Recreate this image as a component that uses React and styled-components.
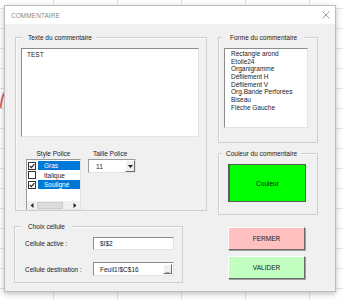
import React from 'react';
import styled, { createGlobalStyle } from 'styled-components';

const GlobalStyle = createGlobalStyle`
  body {
    margin: 0;
    background: #ffffff;
    font-family: 'Liberation Sans', Arial, sans-serif;
  }
`;

const Sheet = styled.div`
  position: relative;
  width: 343px;
  height: 300px;
  overflow: hidden;
  box-sizing: border-box;
  padding: 5px 0 0 4px;
  background-color: #ffffff;
  background-image:
    linear-gradient(to bottom, transparent 19px, #e2e2e2 19px, #e2e2e2 20px),
    linear-gradient(to right, transparent 63px, #e2e2e2 63px, #e2e2e2 64px);
  background-size: 100% 20px, 64px 100%;
  background-position: 0 9px, 54px 0;
`;

const RedScrap = styled.svg`
  position: absolute;
  left: 0;
  top: 90px;
`;

const Dialog = styled.div`
  position: relative;
  width: 332px;
  height: 287px;
  box-sizing: border-box;
  background: #f0f0f0;
  border: 1px solid #bcbcbc;
  box-shadow: 0 2px 6px rgba(0, 0, 0, 0.25);
  font-size: 6.5px;
  color: #1a1a1a;
`;

const TitleBar = styled.div`
  height: 18px;
  background: #ffffff;
  display: flex;
  align-items: center;
  justify-content: space-between;
  padding: 0 5px 0 6px;
`;

const Title = styled.span`
  color: #8a8a8a;
  font-size: 6.5px;
  letter-spacing: 0.05px;
`;

const Body = styled.div`
  display: flex;
  padding: 13px 0 0 9px;
`;

const Column = styled.div`
  display: flex;
  flex-direction: column;
  margin-left: ${p => p.$offset || 0}px;
`;

const Frame = styled.div`
  position: relative;
  box-sizing: border-box;
  width: ${p => p.$w}px;
  height: ${p => p.$h}px;
  margin-top: ${p => p.$mt || 0}px;
  margin-left: ${p => p.$ml || 0}px;
  border: 1px solid #cfcfcf;
  box-shadow: inset 1px 1px 0 #fafafa;
`;

const Legend = styled.span`
  position: absolute;
  top: -5px;
  left: ${p => p.$left}px;
  padding: 0 ${p => p.$pad}px;
  background: #f0f0f0;
  line-height: 9px;
  white-space: nowrap;
`;

const TextBox = styled.div`
  box-sizing: border-box;
  width: 178px;
  height: 89px;
  margin: 10px 0 0 5px;
  padding: 2px 5px;
  background: #ffffff;
  border: 1px solid;
  border-color: #8c8c8c #e3e3e3 #e3e3e3 #8c8c8c;
`;

const FontRow = styled.div`
  display: flex;
  margin: 12px 0 0 10px;
  gap: 7px;
`;

const FontCol = styled.div`
  display: flex;
  flex-direction: column;
  align-items: ${p => (p.$center ? 'center' : 'flex-start')};
`;

const SmallLabel = styled.span`
  height: 10px;
  line-height: 9px;
  padding-left: ${p => p.$pl || 0}px;
`;

const CheckList = styled.div`
  box-sizing: border-box;
  width: 55px;
  height: 51px;
  background: #ffffff;
  border: 1px solid;
  border-color: #9a9a9a #e3e3e3 #e3e3e3 #9a9a9a;
  display: flex;
  flex-direction: column;
  padding-top: 1px;
`;

const CheckRow = styled.div`
  display: flex;
  align-items: center;
  height: 9.5px;
  padding-left: 1px;
`;

const Box = styled.span`
  box-sizing: border-box;
  width: 8px;
  height: 8px;
  border: 1px solid #333333;
  background: #ffffff;
  display: flex;
  align-items: center;
  justify-content: center;
  flex-shrink: 0;
`;

const RowText = styled.span`
  flex: 1;
  height: 9px;
  line-height: 9px;
  margin-left: 2px;
  padding-left: 6px;
  background: ${p => (p.$sel ? '#0078d7' : 'transparent')};
  color: ${p => (p.$sel ? '#ffffff' : '#1a1a1a')};
`;

const HScroll = styled.div`
  margin-top: auto;
  height: 8px;
  display: flex;
  align-items: center;
  background: #f0f0f0;
  padding: 0 1px;
`;

const Arrow = styled.span`
  width: 8px;
  height: 8px;
  display: flex;
  align-items: center;
  justify-content: center;
  margin-left: ${p => p.$ml || 0}px;
`;

const Thumb = styled.span`
  box-sizing: border-box;
  width: 26px;
  height: 7px;
  margin-left: 1px;
  background: #dcdcdc;
  border: 1px solid #cdcdcd;
`;

const Combo = styled.div`
  box-sizing: border-box;
  width: 48px;
  height: 14px;
  display: flex;
  align-items: center;
  background: #ffffff;
  border: 1px solid;
  border-color: #9a9a9a #e3e3e3 #e3e3e3 #9a9a9a;
  padding-left: 7px;
`;

const DropButton = styled.span`
  box-sizing: border-box;
  margin-left: auto;
  width: 10px;
  height: 12px;
  background: #f0f0f0;
  border: 1px solid;
  border-color: #ffffff #6a6a6a #6a6a6a #ffffff;
  display: flex;
  align-items: center;
  justify-content: center;
`;

const ChoixBody = styled.div`
  display: flex;
  flex-direction: column;
  gap: 12px;
  padding: 10px 0 0 10px;
`;

const FieldRow = styled.div`
  display: flex;
  align-items: center;
`;

const FieldLabel = styled.span`
  width: 68px;
`;

const Field = styled.div`
  box-sizing: border-box;
  width: 81px;
  height: ${p => p.$h}px;
  display: flex;
  align-items: center;
  padding-left: 6px;
  background: #ffffff;
  border: 1px solid;
  border-color: #8c8c8c #e3e3e3 #e3e3e3 #8c8c8c;
`;

const RefButton = styled.span`
  box-sizing: border-box;
  margin-left: auto;
  margin-right: 1px;
  width: 9px;
  height: 10px;
  background: #f0f0f0;
  border: 1px solid;
  border-color: #ffffff #6a6a6a #6a6a6a #ffffff;
  display: flex;
  align-items: flex-end;
  justify-content: center;
  font-size: 6px;
  line-height: 6px;
`;

const ShapeList = styled.div`
  box-sizing: border-box;
  width: 84px;
  height: 80px;
  margin: 10px 0 0 5px;
  padding: 1px 0 0 6px;
  background: #ffffff;
  border: 1px solid;
  border-color: #8c8c8c #e3e3e3 #e3e3e3 #8c8c8c;
`;

const ShapeItem = styled.div`
  height: 7.7px;
  line-height: 7.7px;
  white-space: nowrap;
`;

const ColorButton = styled.div`
  box-sizing: border-box;
  width: 78px;
  height: 38px;
  margin: 10px 0 0 9px;
  background: #00ff00;
  border: 1px solid #5a5a5a;
  border-left-width: 2px;
  display: flex;
  align-items: center;
  justify-content: center;
`;

const ButtonStack = styled.div`
  display: flex;
  flex-direction: column;
  gap: 6px;
  margin: 12px 0 0 10px;
`;

const ActionButton = styled.div`
  box-sizing: border-box;
  width: 77px;
  height: 23px;
  background: ${p => p.$bg};
  border: 1px solid;
  border-color: #ffffff #6a6a6a #6a6a6a #ffffff;
  box-shadow: 1px 1px 0 #a0a0a0;
  display: flex;
  align-items: center;
  justify-content: center;
`;

const Check = () => (
  <svg width="6" height="6" viewBox="0 0 6 6">
    <path d="M0.8 3 L2.4 4.6 L5.3 1.2" fill="none" stroke="#222" strokeWidth="1.1" />
  </svg>
);

const Tri = ({ dir }) => (
  <svg width="4" height="5" viewBox="0 0 4 5">
    <path d={dir === 'left' ? 'M3.5 0 L0.5 2.5 L3.5 5 Z' : 'M0.5 0 L3.5 2.5 L0.5 5 Z'} fill="#222" />
  </svg>
);

const shapes = [
  'Rectangle arond',
  'Etoile24',
  'Organigramme',
  'Défilement H',
  'Défilement V',
  'Org.Bande Perforées',
  'Biseau',
  'Flèche Gauche',
];

const styles = [
  { label: 'Gras', on: true },
  { label: 'Italique', on: false },
  { label: 'Souligné', on: true },
];

export default function App() {
  return (
    <>
      <GlobalStyle />
      <Sheet>
        {/* sliver of red cell text peeking out behind the dialog */}
        <RedScrap width="5" height="20" viewBox="0 0 5 20">
          <path d="M0.5 18 C1.5 10 2.5 5 4.5 3" fill="none" stroke="#e06666" strokeWidth="2" />
        </RedScrap>
        <Dialog>
          <TitleBar>
            <Title>COMMENTAIRE</Title>
            <svg width="8" height="8" viewBox="0 0 8 8">
              <path d="M0.5 0.5 L7.5 7.5 M7.5 0.5 L0.5 7.5" stroke="#8a8a8a" strokeWidth="0.8" />
            </svg>
          </TitleBar>
          <Body>
            <Column>
              <Frame $w={192} $h={174} $ml={1}>
                <Legend $left={7} $pad={5}>Texte du commentaire</Legend>
                <TextBox>TEST</TextBox>
                <FontRow>
                  <FontCol $center>
                    <SmallLabel>Style Police</SmallLabel>
                    <CheckList>
                      {styles.map(s => (
                        <CheckRow key={s.label}>
                          <Box>{s.on && <Check />}</Box>
                          <RowText $sel={s.on}>{s.label}</RowText>
                        </CheckRow>
                      ))}
                      <HScroll>
                        <Arrow><Tri dir="left" /></Arrow>
                        <Thumb />
                        <Arrow $ml={8}><Tri dir="right" /></Arrow>
                      </HScroll>
                    </CheckList>
                  </FontCol>
                  <FontCol>
                    <SmallLabel $pl={5}>Taille Police</SmallLabel>
                    <Combo>
                      11
                      <DropButton>
                        <svg width="5" height="3" viewBox="0 0 5 3">
                          <path d="M0 0 L5 0 L2.5 3 Z" fill="#222" />
                        </svg>
                      </DropButton>
                    </Combo>
                  </FontCol>
                </FontRow>
              </Frame>
              <Frame $w={169} $h={57} $mt={15}>
                <Legend $left={6} $pad={7}>Choix cellule</Legend>
                <ChoixBody>
                  <FieldRow>
                    <FieldLabel>Cellule active :</FieldLabel>
                    <Field $h={13}>$I$2</Field>
                  </FieldRow>
                  <FieldRow>
                    <FieldLabel>Cellule destination :</FieldLabel>
                    <Field $h={14}>
                      Feuil1!$C$16
                      <RefButton>_</RefButton>
                    </Field>
                  </FieldRow>
                </ChoixBody>
              </Frame>
            </Column>
            <Column $offset={11}>
              <Frame $w={100} $h={106}>
                <Legend $left={3} $pad={8}>Forme du commentaire</Legend>
                <ShapeList>
                  {shapes.map(s => (
                    <ShapeItem key={s}>{s}</ShapeItem>
                  ))}
                </ShapeList>
              </Frame>
              <Frame $w={100} $h={62} $mt={10}>
                <Legend $left={3} $pad={4}>Couleur du commentaire</Legend>
                <ColorButton>Couleur</ColorButton>
              </Frame>
              <ButtonStack>
                <ActionButton $bg="#ffc0c0">FERMER</ActionButton>
                <ActionButton $bg="#c0ffc0">VALIDER</ActionButton>
              </ButtonStack>
            </Column>
          </Body>
        </Dialog>
      </Sheet>
    </>
  );
}
